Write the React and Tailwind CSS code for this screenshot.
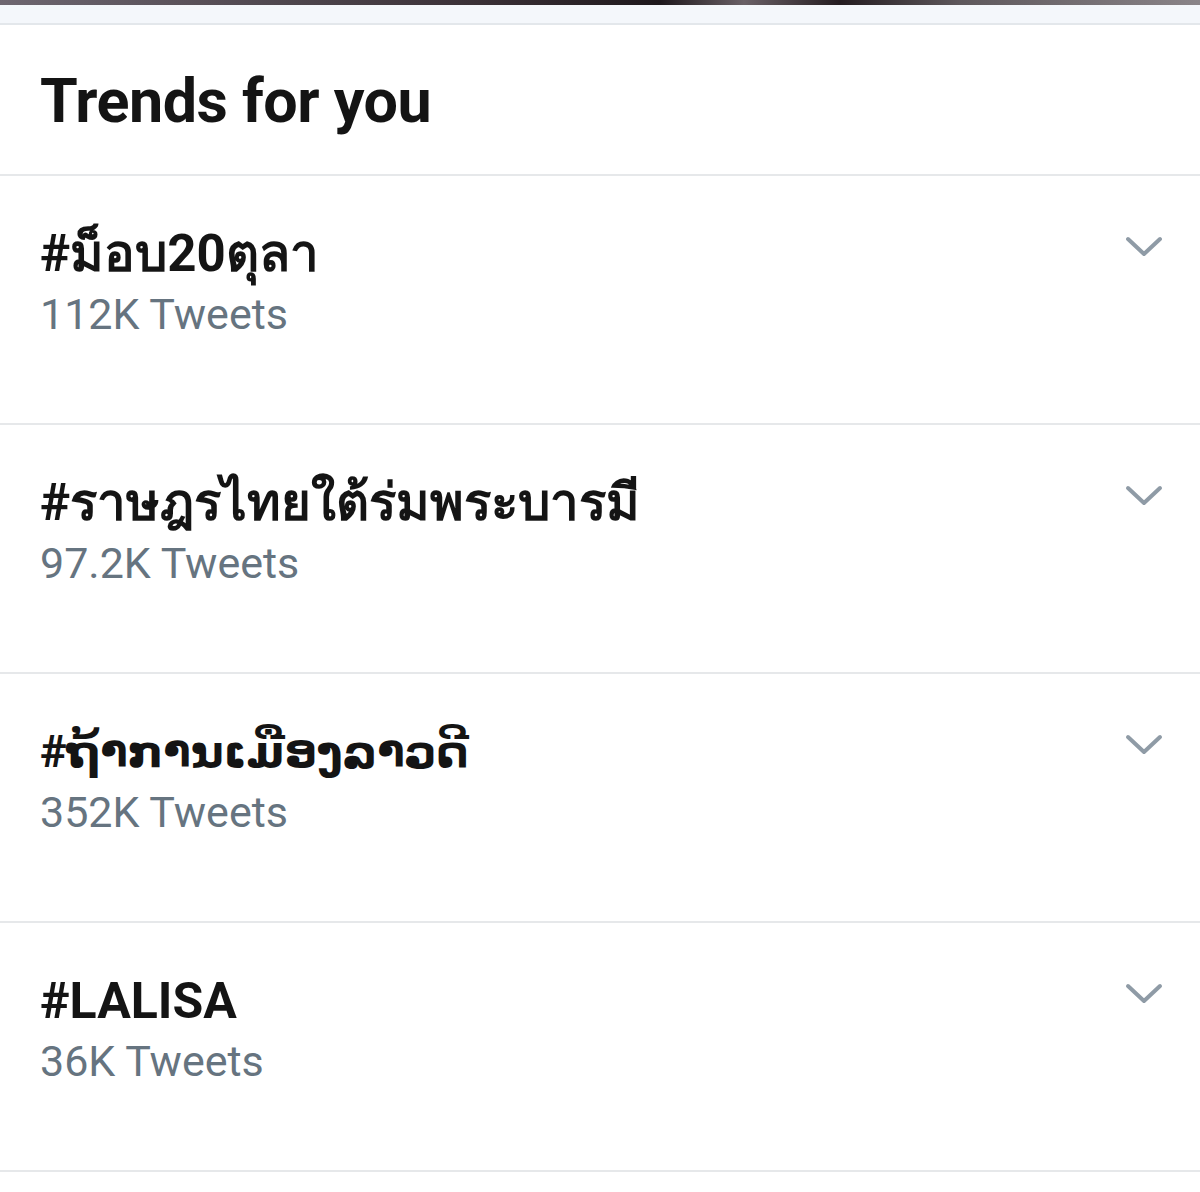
import React from "react";

const trends = [
  { tag: "#ม็อบ20ตุลา", count: "112K Tweets", cls: "text-[51px]" },
  { tag: "#ราษฎรไทยใต้ร่มพระบารมี", count: "97.2K Tweets", cls: "text-[51px]" },
  { tag: "#ຖ້າການເມືອງລາວດີ", count: "352K Tweets", cls: "text-[45px]" },
  { tag: "#LALISA", count: "36K Tweets", cls: "text-[50px]" },
];

function Chevron() {
  return (
    <svg width="40" height="24" viewBox="0 0 40 24" className="block">
      <polyline
        points="4,4 20,19 36,4"
        fill="none"
        stroke="#8f9ba6"
        strokeWidth="4"
        strokeLinecap="round"
        strokeLinejoin="round"
      />
    </svg>
  );
}

export default function App() {
  return (
    <div
      className="w-[1200px] h-[1192px] bg-white overflow-hidden"
      style={{ fontFamily: 'Roboto, "Noto Sans", "DejaVu Sans", sans-serif' }}
    >
      <div className="h-[5px] bg-[linear-gradient(90deg,#6e6670_0%,#5a525a_15%,#3a3036_40%,#1e181c_55%,#6a6066_62%,#241c20_70%,#5e585c_80%,#8a8488_100%)]" />
      <div className="h-[20px] bg-[#f4f7fb] border-b-2 border-[#e3e7eb]" />
      <div className="h-[151px] border-b-2 border-[#e6e8ea] pl-[40px] pt-[46px]">
        <div className="text-[61px] leading-[61px] font-bold text-[#141414] tracking-[-0.5px]">
          Trends for you
        </div>
      </div>
      {trends.map((t) => (
        <div
          key={t.tag}
          className="h-[249px] border-b-2 border-[#e6e8ea] pl-[40px] pr-[36px] flex justify-between"
        >
          <div className="pt-[46px]">
            <div className={`${t.cls} leading-[64px] h-[64px] font-bold text-[#141414] whitespace-nowrap`}>
              {t.tag}
            </div>
            <div className="text-[43px] leading-[56px] text-[#667480]">
              {t.count}
            </div>
          </div>
          <div className="pt-[59px]">
            <Chevron />
          </div>
        </div>
      ))}
    </div>
  );
}
